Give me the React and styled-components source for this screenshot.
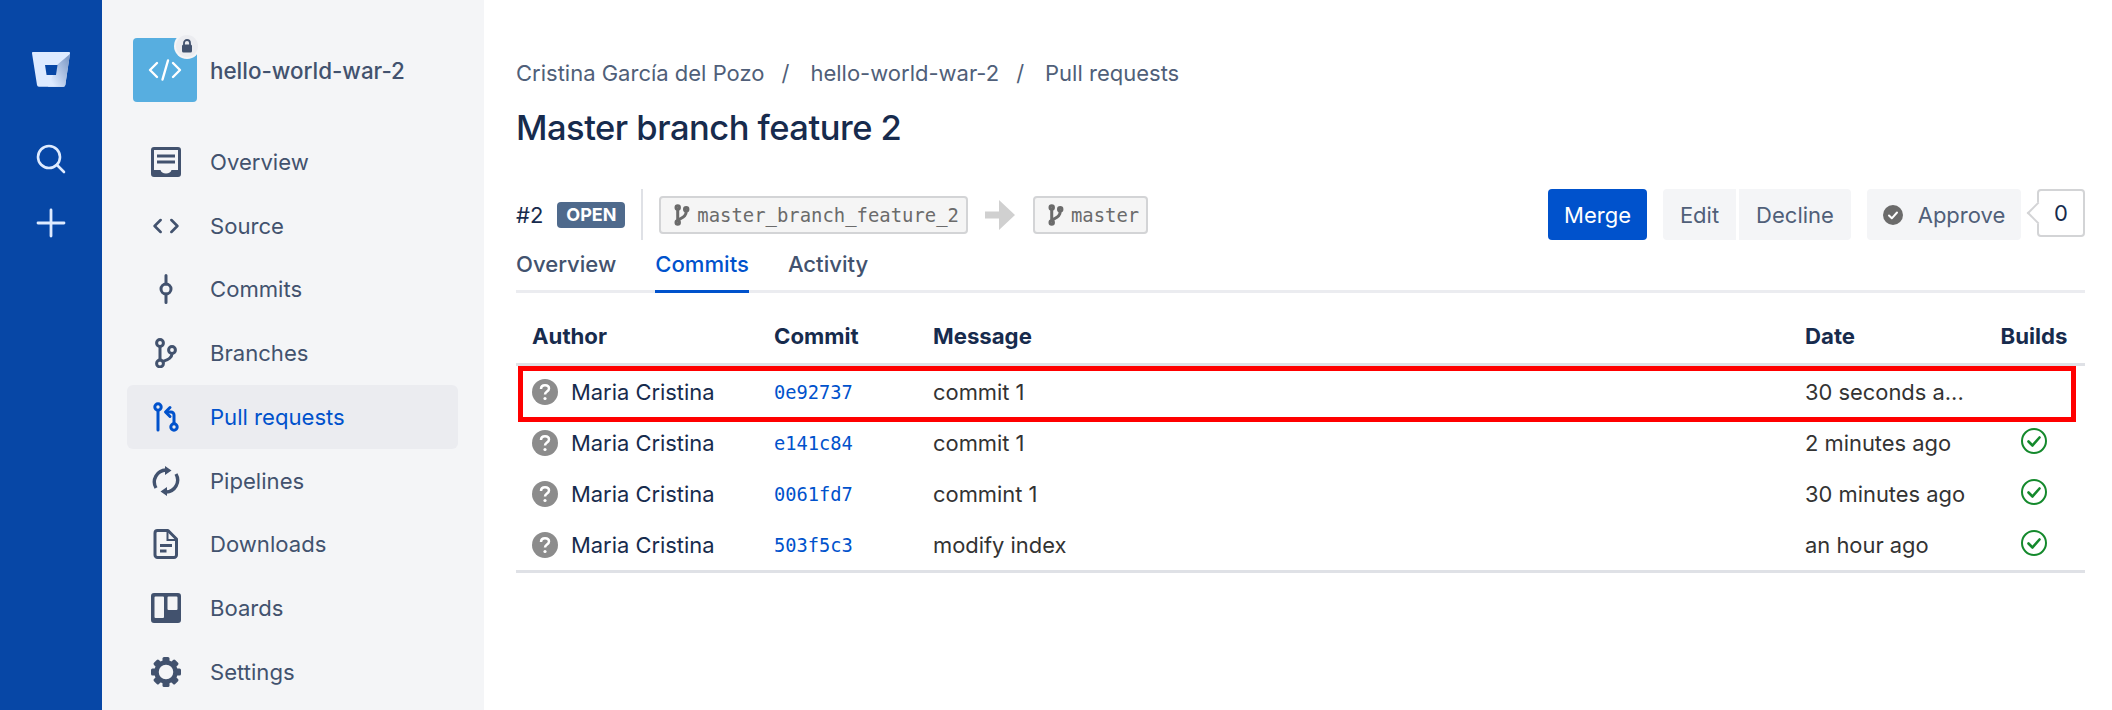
import React from "react";
import styled, { createGlobalStyle } from "styled-components";

const GlobalStyle = createGlobalStyle`
  html, body {
    margin: 0;
    padding: 0;
    background: #fff;
  }
  *, *::before, *::after {
    box-sizing: border-box;
  }
`;

const Page = styled.div`
  display: flex;
  width: 2112px;
  height: 710px;
  overflow: hidden;
  font-family: Inter, "Noto Sans", sans-serif;
  color: #172b4d;
`;

const GlobalNav = styled.nav`
  flex: 0 0 102px;
  display: flex;
  flex-direction: column;
  align-items: center;
  padding-top: 52px;
  background: #0747a6;
`;

const NavButton = styled.div`
  display: flex;
  margin-top: ${(props) => props.top}px;
  margin-right: ${(props) => props.right || 0}px;
`;

const Sidebar = styled.aside`
  flex: 0 0 382px;
  padding: 38px 26px 0 25px;
  background: #f4f5f7;
`;

const RepoHeader = styled.div`
  display: flex;
  align-items: center;
  gap: 13px;
  height: 64px;
  margin: 0 0 28px 6px;
  font-size: 22.4px;
  font-weight: 500;
  color: #42526e;
`;

const RepoIcon = styled.div`
  position: relative;
  display: flex;
  align-items: center;
  justify-content: center;
  width: 64px;
  height: 64px;
  border-radius: 4px;
  background: #57aee0;
`;

const LockBadge = styled.div`
  position: absolute;
  top: -3px;
  right: -1px;
  display: flex;
  align-items: center;
  justify-content: center;
  width: 22px;
  height: 22px;
  border-radius: 50%;
  background: #ebecf0;
  box-shadow: 0 0 0 2px #f4f5f7;
`;

const NavItem = styled.div`
  display: flex;
  align-items: center;
  height: 63.75px;
  padding-left: 24px;
  border-radius: 6px;
  font-size: 22.1px;
  color: ${(props) => (props.$active ? "#0052cc" : "#42526e")};
  background: ${(props) => (props.$active ? "#ebecf0" : "transparent")};
`;

const NavIconSlot = styled.span`
  display: flex;
  align-items: center;
  justify-content: center;
  width: 30px;
  height: 30px;
  margin-right: 29px;
`;

const Content = styled.main`
  flex: 1;
  min-width: 0;
  padding: 57px 27px 0 32px;
`;

const Breadcrumbs = styled.div`
  display: flex;
  align-items: center;
  height: 32px;
  font-size: 22px;
  color: #505f79;
`;

const Slash = styled.span`
  margin: 0 21px 0 17px;
`;

const Title = styled.h1`
  height: 44px;
  margin: 17px 0 39px;
  font-size: 34.5px;
  line-height: 44px;
  font-weight: 500;
  letter-spacing: -0.5px;
  color: #172b4d;
`;

const Toolbar = styled.div`
  display: flex;
  align-items: center;
  height: 51px;
`;

const PrNumber = styled.span`
  font-size: 22px;
  color: #172b4d;
`;

const StatusBadge = styled.span`
  display: flex;
  align-items: center;
  justify-content: center;
  width: 68px;
  height: 26px;
  margin-left: 14px;
  border-radius: 4px;
  font-size: 18px;
  font-weight: 700;
  color: #fff;
  background: #4f6a8c;
`;

const Divider = styled.span`
  width: 2px;
  height: 51px;
  margin: 0 16px;
  background: #dfe1e6;
`;

const BranchChip = styled.span`
  display: flex;
  align-items: center;
  gap: 7px;
  height: 38px;
  padding: 0 7px 0 12px;
  border: 2px solid #d3d4d6;
  border-radius: 4px;
  font-family: "DejaVu Sans Mono", "Liberation Mono", monospace;
  font-size: 18.9px;
  color: #6b6b6b;
  background: #f5f5f5;
`;

const ArrowSlot = styled.span`
  display: flex;
  margin: 0 18px 0 17px;
`;

const Actions = styled.div`
  display: flex;
  align-items: flex-start;
  height: 51px;
  margin-left: auto;
`;

const Button = styled.div`
  display: flex;
  align-items: center;
  justify-content: center;
  gap: 15px;
  width: ${(props) => props.width}px;
  height: 51px;
  margin-right: ${(props) => props.gap || 0}px;
  border-radius: ${(props) => props.radius || "4px"};
  font-size: 22px;
  color: ${(props) => (props.$primary ? "#fff" : "#505f79")};
  background: ${(props) => (props.$primary ? "#0052cc" : "#f4f5f7")};
`;

const CountBox = styled.div`
  position: relative;
  display: flex;
  align-items: center;
  justify-content: center;
  width: 48px;
  height: 48px;
  border: 2px solid #d3d4d6;
  border-radius: 4px;
  font-size: 22px;
  color: #172b4d;
  background: #fff;

  &::before {
    content: "";
    position: absolute;
    left: -9px;
    top: 14px;
    width: 16px;
    height: 16px;
    border-left: 2px solid #d3d4d6;
    border-bottom: 2px solid #d3d4d6;
    background: #fff;
    transform: rotate(45deg);
  }
`;

const CountValue = styled.span`
  position: relative;
`;

const Tabs = styled.div`
  display: flex;
  gap: 39px;
  height: 53px;
  border-bottom: 3px solid #ebecf0;
`;

const Tab = styled.div`
  display: flex;
  align-items: center;
  height: 53px;
  padding-bottom: 2px;
  border-bottom: 3px solid ${(props) => (props.$active ? "#0052cc" : "transparent")};
  font-size: 22.1px;
  font-weight: 500;
  color: ${(props) => (props.$active ? "#0052cc" : "#42526e")};
`;

const columns = "242px 159px 872px 194px 1fr";

const HeadRow = styled.div`
  display: grid;
  grid-template-columns: ${columns};
  align-items: center;
  height: 73px;
  padding: 14px 0 0 16px;
  border-bottom: 3px solid #dfe1e6;
  font-size: 22.2px;
  font-weight: 700;
  color: #172b4d;
`;

const Row = styled.div`
  position: relative;
  display: grid;
  grid-template-columns: ${columns};
  align-items: center;
  height: 51px;
  padding-left: 16px;
  font-size: 21.9px;
  color: #333;

  ${(props) =>
    props.$marked &&
    `&::after {
      content: "";
      position: absolute;
      left: 2px;
      right: 9px;
      top: 0;
      height: 56px;
      border: 5px solid #f00;
      pointer-events: none;
    }`}
`;

const TableEnd = styled.div`
  height: 3px;
  background: #dfe1e6;
`;

const AuthorCell = styled.div`
  display: flex;
  align-items: center;
  gap: 13px;
  color: #172b4d;
`;

const CommitLink = styled.span`
  margin-top: 2px;
  font-family: "DejaVu Sans Mono", "Liberation Mono", monospace;
  font-size: 18.7px;
  color: #0052cc;
`;

const BuildCell = styled.div`
  display: flex;
  justify-content: center;
  width: 70px;
  margin-top: -3px;
`;

const BuildsHead = styled.div`
  width: 70px;
  text-align: center;
`;

const Bucket = () => (
  <svg width="38" height="35" viewBox="0 0 38 35">
    <defs>
      <linearGradient id="bucketShade" x1="1" y1="0.2" x2="0.2" y2="0.9">
        <stop offset="0" stopColor="#7f9bc8" />
        <stop offset="1" stopColor="#deebff" />
      </linearGradient>
    </defs>
    <path d="M1 0H37a1 1 0 0 1 1 1.2L33.3 33a2 2 0 0 1-2 1.8H7a2 2 0 0 1-2-1.7L0 1.2A1 1 0 0 1 1 0Z" fill="#deebff" />
    <path d="M25.5 12.5 38 2 33.3 33a2 2 0 0 1-2 1.8H16Z" fill="url(#bucketShade)" />
    <path d="M13 13H25.5L24 23H14.6Z" fill="#0747a6" />
  </svg>
);

const SearchIcon = () => (
  <svg width="30" height="30" viewBox="0 0 30 30" fill="none" stroke="#deebff" strokeWidth="2.6" strokeLinecap="round">
    <circle cx="13" cy="13" r="11" />
    <path d="M21 21l7 7" />
  </svg>
);

const PlusIcon = () => (
  <svg width="30" height="30" viewBox="0 0 30 30" fill="none" stroke="#deebff" strokeWidth="2.8" strokeLinecap="round">
    <path d="M15 2v26M2 15h26" />
  </svg>
);

const CodeIcon = ({ size = 16, color = "#42526e", width = 2 }) => (
  <svg width={size} height={size} viewBox="0 0 24 24" fill="none" stroke={color} strokeWidth={width} strokeLinecap="round" strokeLinejoin="round">
    <path d="M7 6.5 1.5 12 7 17.5M17 6.5l5.5 5.5L17 17.5" />
  </svg>
);

const RepoCode = () => (
  <svg width="34" height="22" viewBox="0 0 34 22" fill="none" stroke="#fff" strokeWidth="2.4" strokeLinecap="round" strokeLinejoin="round">
    <path d="M9 4 2 11l7 7M25 4l7 7-7 7M20 1.5 14.500 20.500" />
  </svg>
);

const LockIcon = () => (
  <svg width="12" height="14" viewBox="0 0 12 14">
    <path d="M3 6V4a3 3 0 0 1 6 0v2" fill="none" stroke="#42526e" strokeWidth="1.8" />
    <rect x="1" y="5.5" width="10" height="8" rx="1.5" fill="#42526e" />
  </svg>
);

const OverviewIcon = () => (
  <svg width="30" height="30" viewBox="0 0 30 30">
    <path fillRule="evenodd" fill="#42526e" d="M3 0H27a3 3 0 0 1 3 3V27a3 3 0 0 1-3 3H3a3 3 0 0 1-3-3V3a3 3 0 0 1 3-3ZM3 3V23H9.5C10 25 12 26.5 15 26.5S20 25 20.5 23H27V3Z" />
    <path fill="#42526e" d="M6 7.5H24V10.5H6ZM6 13.5H24V16.5H6Z" />
  </svg>
);

const CommitIcon = () => (
  <svg width="30" height="30" viewBox="0 0 30 30" fill="none" stroke="#42526e" strokeWidth="3" strokeLinecap="round">
    <circle cx="15" cy="15" r="5" />
    <path d="M15 1.5V10M15 20V28.5" />
  </svg>
);

const BranchIcon = () => (
  <svg width="30" height="30" viewBox="0 0 30 30" fill="none" stroke="#42526e" strokeWidth="3" strokeLinecap="round">
    <circle cx="9" cy="5" r="3.4" />
    <circle cx="21" cy="12" r="3.4" />
    <circle cx="9" cy="25.5" r="3.4" />
    <path d="M9 8.5V22M21 15.5c0 4-3 5.5-9 8" />
  </svg>
);

const PullIcon = () => (
  <svg width="30" height="30" viewBox="0 0 30 30" fill="none" stroke="#0052cc" strokeWidth="3" strokeLinecap="round" strokeLinejoin="round">
    <circle cx="7" cy="5" r="3.2" />
    <circle cx="23" cy="25" r="3.2" />
    <path d="M7 8.5V28M23 21.5V13a3 3 0 0 0-3-3h-4" />
    <path d="M19 5.5l-4.5 4.5L19 14.5" />
  </svg>
);

const PipelineIcon = () => (
  <svg width="30" height="30" viewBox="0 0 30 30" fill="none">
    <path d="M5 22A12 12 0 0 1 15 4M25 8A12 12 0 0 1 15 26" stroke="#42526e" strokeWidth="3.4" />
    <path d="M14 0l6.500 4.500L14 9ZM16 21l-6.500 4.500L16 30Z" fill="#42526e" />
  </svg>
);

const DownloadIcon = () => (
  <svg width="30" height="30" viewBox="0 0 30 30" fill="none">
    <path d="M6.5 1.5H17L25.5 10V26a2.5 2.5 0 0 1-2.5 2.5H6.5A2.5 2.5 0 0 1 4 26V4A2.5 2.5 0 0 1 6.5 1.5Z" stroke="#42526e" strokeWidth="3" strokeLinejoin="round" />
    <path d="M16.5 2V11H25" stroke="#42526e" strokeWidth="2" />
    <path d="M9 15H21V18H9ZM9 20.5H15.5V23.5H9Z" fill="#42526e" />
  </svg>
);

const BoardIcon = () => (
  <svg width="30" height="30" viewBox="0 0 30 30">
    <path fillRule="evenodd" fill="#42526e" d="M3 0H27a3 3 0 0 1 3 3V27a3 3 0 0 1-3 3H3a3 3 0 0 1-3-3V3a3 3 0 0 1 3-3ZM4.5 3.5a1 1 0 0 0-1 1V24a1 1 0 0 0 1 1H12a1 1 0 0 0 1-1V4.500a1 1 0 0 0-1-1ZM17.500 3.500a1 1 0 0 0-1 1V16a1 1 0 0 0 1 1H25.500a1 1 0 0 0 1-1V4.500a1 1 0 0 0-1-1Z" />
  </svg>
);

const GearIcon = () => (
  <svg width="30" height="30" viewBox="0 0 30 30" fill="none">
    <circle cx="15" cy="15" r="9.5" stroke="#42526e" strokeWidth="4.500" />
    <g fill="#42526e">
      {[0, 45, 90, 135, 180, 225, 270, 315].map((deg) => (
        <rect key={deg} x="11.500" y="0" width="7" height="6" rx="1.500" transform={`rotate(${deg} 15 15)`} />
      ))}
    </g>
  </svg>
);

const BranchGlyph = () => (
  <svg width="17" height="24" viewBox="0 0 18 24" fill="none" stroke="#6b6b6b" strokeWidth="3.200" strokeLinecap="round">
    <circle cx="5" cy="4" r="1.800" />
    <circle cx="14" cy="6" r="1.800" />
    <circle cx="5" cy="20" r="1.800" />
    <path d="M5 6V18M14 8c0 5-3 6-8 9" />
  </svg>
);

const FlowArrow = () => (
  <svg width="30" height="32" viewBox="0 0 30 32">
    <path d="M0 12.500H14V1L30 16 14 31V19.500H0Z" fill="#d0d0d0" />
  </svg>
);

const ApproveIcon = () => (
  <svg width="20" height="20" viewBox="0 0 20 20">
    <circle cx="10" cy="10" r="10" fill="#6b6b6b" />
    <path d="M6 10.500l2.800 2.800L14 7.500" fill="none" stroke="#fff" strokeWidth="2" strokeLinecap="round" strokeLinejoin="round" />
  </svg>
);

const UnknownAvatar = () => (
  <svg width="26" height="26" viewBox="0 0 26 26">
    <circle cx="13" cy="13" r="13" fill="#8c8c8c" />
    <path d="M9 10c0-2.500 1.800-3.800 4-3.800s4 1.300 4 3.400c0 3-4 3-4 5.900" fill="none" stroke="#fff" strokeWidth="2.500" />
    <circle cx="13" cy="19.500" r="1.600" fill="#fff" />
  </svg>
);

const BuildOk = () => (
  <svg width="26" height="26" viewBox="0 0 26 26" fill="none" stroke="#14892c" strokeWidth="2">
    <circle cx="13" cy="13" r="12" />
    <path d="M7.500 13.500l4 4L18.500 9.500" strokeWidth="2.600" strokeLinecap="round" strokeLinejoin="round" />
  </svg>
);

const navItems = [
  { label: "Overview", icon: <OverviewIcon /> },
  { label: "Source", icon: <CodeIcon size={26} width={2.400} /> },
  { label: "Commits", icon: <CommitIcon /> },
  { label: "Branches", icon: <BranchIcon /> },
  { label: "Pull requests", icon: <PullIcon />, active: true },
  { label: "Pipelines", icon: <PipelineIcon /> },
  { label: "Downloads", icon: <DownloadIcon /> },
  { label: "Boards", icon: <BoardIcon /> },
  { label: "Settings", icon: <GearIcon /> },
];

const commits = [
  { hash: "0e92737", message: "commit 1", date: "30 seconds a...", marked: true },
  { hash: "e141c84", message: "commit 1", date: "2 minutes ago", built: true },
  { hash: "0061fd7", message: "commint 1", date: "30 minutes ago", built: true },
  { hash: "503f5c3", message: "modify index", date: "an hour ago", built: true },
];

const App = () => {
  return (
    <Page>
      <GlobalStyle />
      <GlobalNav>
        <Bucket />
        <NavButton top={57} right={1}>
          <SearchIcon />
        </NavButton>
        <NavButton top={34}>
          <PlusIcon />
        </NavButton>
      </GlobalNav>

      <Sidebar>
        <RepoHeader>
          <RepoIcon>
            <RepoCode />
            <LockBadge>
              <LockIcon />
            </LockBadge>
          </RepoIcon>
          hello-world-war-2
        </RepoHeader>
        {navItems.map((item) => (
          <NavItem key={item.label} $active={item.active}>
            <NavIconSlot>{item.icon}</NavIconSlot>
            {item.label}
          </NavItem>
        ))}
      </Sidebar>

      <Content>
        <Breadcrumbs>
          Cristina García del Pozo
          <Slash>/</Slash>
          hello-world-war-2
          <Slash>/</Slash>
          Pull requests
        </Breadcrumbs>
        <Title>Master branch feature 2</Title>

        <Toolbar>
          <PrNumber>#2</PrNumber>
          <StatusBadge>OPEN</StatusBadge>
          <Divider />
          <BranchChip>
            <BranchGlyph />
            master_branch_feature_2
          </BranchChip>
          <ArrowSlot>
            <FlowArrow />
          </ArrowSlot>
          <BranchChip>
            <BranchGlyph />
            master
          </BranchChip>
          <Actions>
            <Button $primary width={99} gap={16}>Merge</Button>
            <Button width={73} gap={3} radius="4px 0 0 4px">Edit</Button>
            <Button width={112} gap={16} radius="0 4px 4px 0">Decline</Button>
            <Button width={154} gap={16}>
              <ApproveIcon />
              Approve
            </Button>
            <CountBox>
              <CountValue>0</CountValue>
            </CountBox>
          </Actions>
        </Toolbar>

        <Tabs>
          <Tab>Overview</Tab>
          <Tab $active>Commits</Tab>
          <Tab>Activity</Tab>
        </Tabs>

        <HeadRow>
          <div>Author</div>
          <div>Commit</div>
          <div>Message</div>
          <div>Date</div>
          <BuildsHead>Builds</BuildsHead>
        </HeadRow>
        {commits.map((commit) => (
          <Row key={commit.hash} $marked={commit.marked}>
            <AuthorCell>
              <UnknownAvatar />
              Maria Cristina
            </AuthorCell>
            <CommitLink>{commit.hash}</CommitLink>
            <div>{commit.message}</div>
            <div>{commit.date}</div>
            <BuildCell>{commit.built && <BuildOk />}</BuildCell>
          </Row>
        ))}
        <TableEnd />
      </Content>
    </Page>
  );
};

export default App;
